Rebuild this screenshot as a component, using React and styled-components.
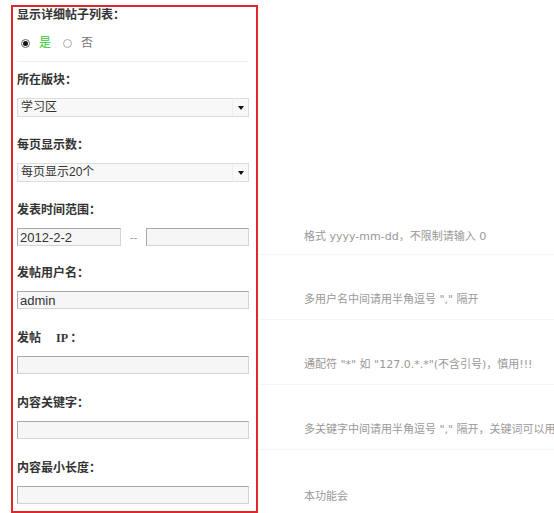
import React from 'react';
import styled, { createGlobalStyle } from 'styled-components';

const GlobalStyle = createGlobalStyle`
    body {
        margin: 0;
        background: #fff;
        overflow: hidden;
    }
`
const Page = styled.div`
    width: 554px;
    height: 513px;
    box-sizing: border-box;
    padding: 5px 0 0 11px;
    overflow: hidden;
    font-family: "Liberation Sans", "Noto Sans CJK SC", sans-serif;
`
const Row = styled.div`
    display: grid;
    grid-template-columns: 247px 1fr;
`
const Field = styled.div`
    box-sizing: border-box;
    border-left: 2px solid #e0282c;
    border-right: 2px solid #e0282c;
    border-top: ${p => p.$first ? '2px solid #e0282c' : 'none'};
    border-bottom: ${p => p.$last ? '2px solid #e0282c' : 'none'};
    padding: ${p => p.$first ? 0 : 10}px 7px ${p => p.$pb}px 4px;
`
const Label = styled.div`
    height: 16px;
    font-family: "Liberation Serif", "Noto Sans CJK SC", serif;
    font-size: 12px;
    font-weight: 700;
    line-height: 16px;
    color: #333;
    white-space: nowrap;
    margin-bottom: ${p => p.$gap ?? 10}px;
`
const RadioRow = styled.div`
    display: flex;
    align-items: center;
    height: 16px;
    margin-top: 12px;
    padding: 0 0 10px 4px;
    border-bottom: 1px solid #eee;
`
const RadioOption = styled.div`
    display: flex;
    align-items: center;
    height: 16px;
    gap: 9px;
    margin-right: 12px;
    font-size: 12px;
    line-height: 16px;
    color: ${p => p.$active ? '#2fc82f' : '#777'};
`
const Radio = styled.span`
    position: relative;
    width: 9px;
    height: 9px;
    box-sizing: border-box;
    border-radius: 50%;
    border: 1px solid ${p => p.$checked ? '#666' : '#aaa'};
    background: #fff;
    &::after {
        content: '';
        position: absolute;
        left: 1px;
        top: 1px;
        width: 5px;
        height: 5px;
        border-radius: 50%;
        background: ${p => p.$checked ? '#111' : 'transparent'};
    }
`
const SelectBox = styled.div`
    display: flex;
    align-items: center;
    width: 232px;
    height: 19px;
    box-sizing: border-box;
    border: 1px solid #ddd;
    background: #f8f8f8;
    font-size: 12px;
    color: #333;
    overflow: hidden;
`
const SelectText = styled.span`
    flex: 1;
    padding-left: 3px;
    line-height: 17px;
    height: 17px;
`
const Arrow = styled.span`
    display: flex;
    align-items: center;
    justify-content: center;
    width: 15px;
    height: 100%;
    border-left: 1px solid #eee;
    &::after {
        content: '';
        border-left: 3px solid transparent;
        border-right: 3px solid transparent;
        border-top: 4px solid #111;
    }
`
const TextBox = styled.input`
    display: block;
    width: ${p => p.$w || 232}px;
    height: 18px;
    box-sizing: border-box;
    margin: 0;
    padding: 0 2px;
    border: 1px solid #d4d4d4;
    border-top-color: #a9a9a9;
    border-left-color: #a9a9a9;
    background: #f6f6f6;
    font-family: "Liberation Sans", "Noto Sans CJK SC", sans-serif;
    font-size: 13px;
    color: #333;
    outline: none;
`
const DateRange = styled.div`
    display: flex;
    align-items: center;
    height: 18px;
`
const Dash = styled.span`
    width: 8px;
    margin: 0 9px 0 9px;
    font-size: 11px;
    color: #999;
    line-height: 18px;
    white-space: nowrap;
    text-align: center;
`
const Hint = styled.div`
    display: flex;
    align-items: flex-end;
    padding: 0 0 ${p => p.$pb}px 46px;
    box-shadow: ${p => p.$line ? 'inset 0 -1px 0 #f5f5f5' : 'none'};
    overflow: hidden;
`
const HintText = styled.span`
    display: block;
    height: ${p => p.$lh}px;
    font-family: "DejaVu Sans", "Noto Sans CJK SC", sans-serif;
    font-size: 11px;
    line-height: ${p => p.$lh}px;
    color: #999;
    white-space: nowrap;
`

const sections = [
    { label: '所在版块：', type: 'select', value: '学习区', pb: 10 },
    { label: '每页显示数：', type: 'select', value: '每页显示20个', pb: 10 },
    { label: '发表时间范围：', type: 'date', value: '2012-2-2', pb: 9, hint: '格式 yyyy-mm-dd，不限制请输入 0' },
    { label: '发帖用户名：', type: 'text', value: 'admin', pb: 11, hint: '多用户名中间请用半角逗号 "," 隔开' },
    { label: '发帖\u3000 IP ：', type: 'text', value: '', pb: 11, hint: '通配符 "*" 如 "127.0.*.*"(不含引号)，慎用!!!' },
    { label: '内容关键字：', type: 'text', value: '', pb: 11, hint: '多关键字中间请用半角逗号 "," 隔开，关键词可以用' },
    { label: '内容最小长度：', type: 'text', value: '', pb: 7, hint: '本功能会', last: true },
];

const Control = ({ type, value }) => {
    if (type === 'select') {
        return (
            <SelectBox>
                <SelectText>{value}</SelectText>
                <Arrow />
            </SelectBox>
        );
    }
    if (type === 'date') {
        return (
            <DateRange>
                <TextBox $w={104} readOnly defaultValue={value} />
                <Dash>--</Dash>
                <TextBox $w={103} readOnly defaultValue="" />
            </DateRange>
        );
    }
    return <TextBox readOnly defaultValue={value} />;
}

export default function App() {
    return (
        <Page>
            <GlobalStyle />
            <Row>
                <Field $first $pb={0}>
                    <Label $gap={0}>显示详细帖子列表：</Label>
                    <RadioRow>
                        <RadioOption $active>
                            <Radio $checked />
                            是
                        </RadioOption>
                        <RadioOption>
                            <Radio />
                            否
                        </RadioOption>
                    </RadioRow>
                </Field>
                <div />
            </Row>
            {sections.map(s => (
                <Row key={s.label}>
                    <Field $pb={s.pb} $last={s.last}>
                        <Label>{s.label}</Label>
                        <Control type={s.type} value={s.value} />
                    </Field>
                    <Hint $pb={s.pb} $line={!!s.hint && !s.last}>
                        {s.hint && <HintText $lh={s.type === 'select' ? 19 : 18}>{s.hint}</HintText>}
                    </Hint>
                </Row>
            ))}
        </Page>
    );
}
